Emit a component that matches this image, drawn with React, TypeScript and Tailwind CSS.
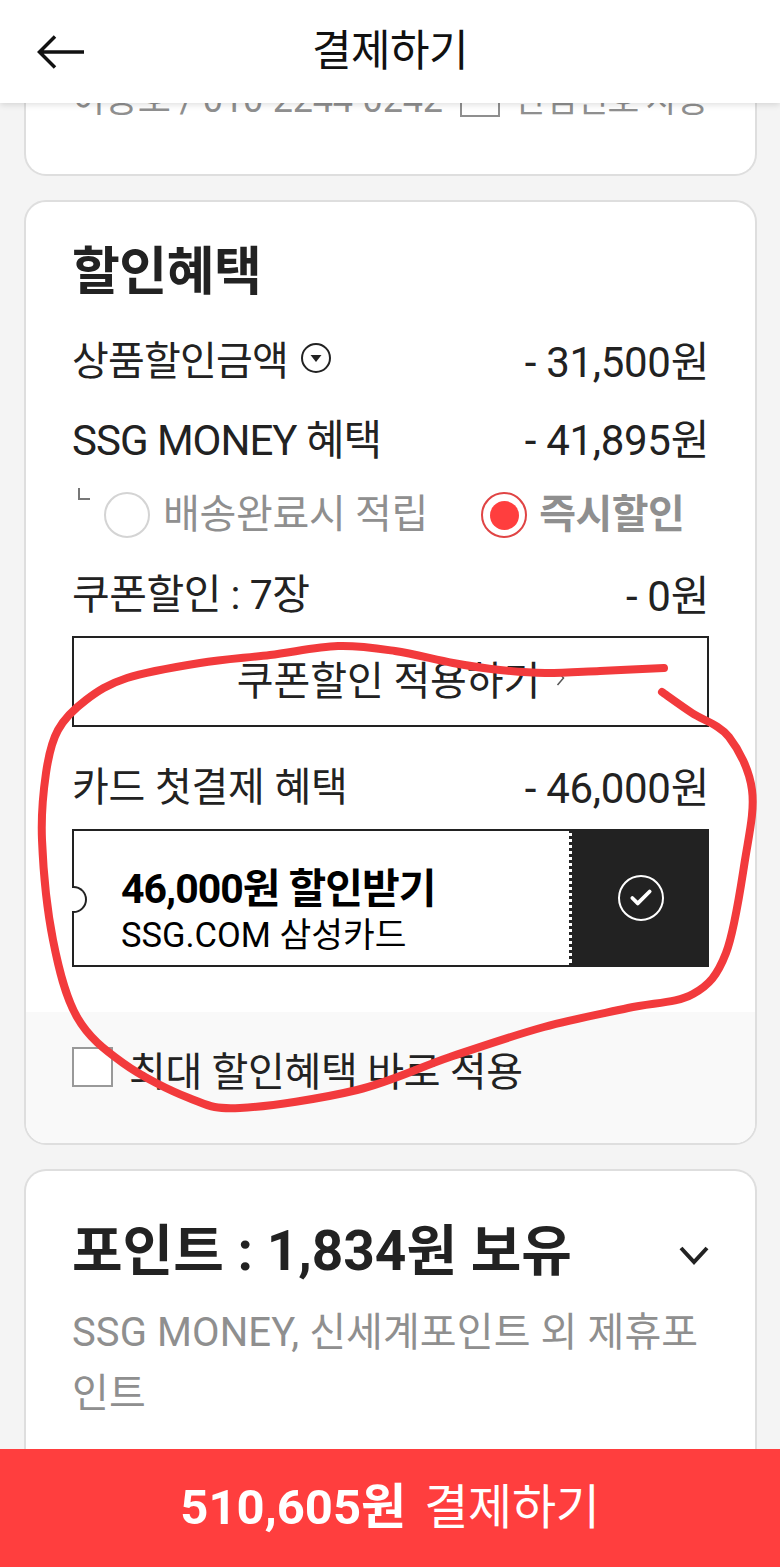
import React from 'react';
import { Check } from 'lucide-react';

// Hand-drawn marker stroke over the screenshot, smoothed through these points
const markerPoints: [number, number][] = [
  [664, 668], [600, 671], [545, 673], [500, 670], [453, 663], [395, 651], [338, 646], [270, 655], [200, 663], [127, 678],
  [86, 700], [58, 730], [46, 773], [42, 840], [53, 940], [77, 1017], [123, 1063], [189, 1098], [240, 1108],
  [357, 1090], [450, 1057], [544, 1027], [628, 1008], [693, 994], [726, 953], [745, 860], [752, 790], [729, 737],
  [692, 713], [662, 692],
];

const markerPath = markerPoints.reduce((d, p, i, pts) => {
  if (i === 0) return `M${p[0]} ${p[1]}`;
  const p0 = pts[Math.max(i - 2, 0)];
  const p1 = pts[i - 1];
  const p3 = pts[Math.min(i + 1, pts.length - 1)];
  const c1 = [p1[0] + (p[0] - p0[0]) / 6, p1[1] + (p[1] - p0[1]) / 6];
  const c2 = [p[0] - (p3[0] - p1[0]) / 6, p[1] - (p3[1] - p1[1]) / 6];
  return `${d} C${c1[0]} ${c1[1]} ${c2[0]} ${c2[1]} ${p[0]} ${p[1]}`;
}, '');

const Row = ({ label, amount, className = '', children }: { label: string; amount: string; className?: string; children?: React.ReactNode }) => (
  <div className={`flex h-[60px] items-center justify-between text-[#222] ${className}`}>
    <span className="flex items-center">
      {label}
      {children}
    </span>
    <span className="-mr-[1px] text-[42px] tracking-[-0.3px]">{amount}</span>
  </div>
);

export default function App() {
  return (
    <div className="relative flex h-[1567px] w-[780px] flex-col overflow-hidden bg-[#f4f4f4] font-['Roboto','Noto_Sans_CJK_KR',sans-serif]">
      {/* Header */}
      <header className="relative z-10 flex h-[103px] shrink-0 items-center justify-center bg-white shadow-[0_2px_6px_rgba(0,0,0,0.12)]">
        <svg className="absolute left-[36px] top-[34px]" width="50" height="36" viewBox="0 0 50 36" fill="none" stroke="#111" strokeWidth="3.5">
          <path d="M48 18H4M19 2.500 3.500 18 19 33.500" />
        </svg>
        <h1 className="text-[43px] font-normal tracking-[-0.5px] text-[#111]">결제하기</h1>
      </header>

      <main className="min-h-0 flex-1 overflow-hidden pl-[24px] pr-[23px]">
        {/* Orderer card, scrolled under the header */}
        <section className="-mt-[40px] h-[113px] rounded-b-[22px] border-2 border-t-0 border-[#dedede] bg-white pl-[46px] pr-[47px]">
          <div className="flex h-[61px] items-end justify-between pb-[2px] text-[36px] leading-[44px] tracking-[-0.2px] text-[#8f8f8f]">
            <span>이용호 / 010-2244-0242</span>
            <span className="flex items-end gap-[15px] text-[34.500px] tracking-[-0.8px]">
              <span className="mb-[5px] h-[40px] w-[40px] border-2 border-[#8f8f8f]" />
              안심번호 사용
            </span>
          </div>
        </section>

        {/* Discount card */}
        <section className="mt-[24px] flex h-[945px] flex-col overflow-hidden rounded-[22px] border-2 border-[#dedede] bg-white">
          <div className="flex-1 pl-[46px] pr-[47px]">
            <h2 className="mt-[40px] h-[62px] text-[52px] font-bold leading-[62px] tracking-[-0.5px] text-[#222]">할인혜택</h2>
            <Row label="상품할인금액" amount="- 31,500원" className="mt-[28px] text-[40px] tracking-[-0.8px]">
              <svg className="mb-[8px] ml-[12px]" width="32" height="32" viewBox="0 0 32 32" fill="none">
                <circle cx="16" cy="16" r="14" stroke="#222" strokeWidth="2" />
                <path d="M10.500 13h11L16 20z" fill="#222" />
              </svg>
            </Row>
            <Row label="SSG MONEY 혜택" amount="- 41,895원" className="mt-[18px] text-[42px] tracking-[-1px]" />

            <div className="relative mt-[15px] flex h-[60px] items-center pl-[32px] text-[40px] text-[#8f8f8f]">
              <span className="absolute left-[6px] top-[3px] h-[12px] w-[12px] border-b-2 border-l-2 border-[#777]" />
              <span className="h-[46px] w-[46px] rounded-full border-2 border-[#d4d4d4]" />
              <span className="ml-[13px] tracking-[-0.3px]">배송완료시 적립</span>
              <span className="ml-[53px] flex h-[46px] w-[46px] items-center justify-center rounded-full border-2 border-[#e04444]">
                <span className="h-[29px] w-[29px] rounded-full bg-[#ff3e3e]" />
              </span>
              <span className="ml-[12px] font-bold tracking-[-0.5px]">즉시할인</span>
            </div>

            <Row label="쿠폰할인 : 7장" amount="- 0원" className="mt-[21px] text-[41px] tracking-[-0.5px]" />
            <button type="button" className="mt-[10px] flex h-[91px] w-[637px] items-center justify-center border-2 border-[#222] bg-white pr-[4px] text-[40px] tracking-[-0.1px] text-[#222]">
              <span className="relative">
                쿠폰할인 적용하기
                <svg className="absolute -right-[26px] top-[17px]" width="10" height="18" viewBox="0 0 10 18" fill="none" stroke="#555" strokeWidth="1.500">
                  <path d="M1.500 2l6 7-6 7" />
                </svg>
              </span>
            </button>

            <Row label="카드 첫결제 혜택" amount="- 46,000원" className="mt-[31px] text-[40px] tracking-[-0.2px]" />

            {/* Coupon ticket */}
            <div className="relative mt-[11px] flex h-[138px] w-[637px]">
              <div className="flex flex-1 flex-col justify-center border-y-2 border-l-2 border-[#222] bg-white pl-[47px] pt-[24px] text-black">
                <span className="h-[50px] text-[41px] font-bold leading-[50px] tracking-[-1px]">46,000원 할인받기</span>
                <span className="h-[42px] text-[34.500px] leading-[42px]">SSG.COM 삼성카드</span>
              </div>
              <span className="absolute left-0 top-[57px] h-[27px] w-[15px] rounded-r-full border-2 border-l-0 border-[#222] bg-white" />
              <span className="w-[3px] border-l-[3px] border-dotted border-[#222] bg-white" />
              <div className="flex w-[137px] items-center justify-center bg-[#222]">
                <span className="flex h-[46px] w-[46px] items-center justify-center rounded-full border-2 border-white">
                  <Check size={26} strokeWidth={3.5} color="#fff" />
                </span>
              </div>
            </div>
          </div>

          <div className="flex h-[131px] shrink-0 items-start bg-[#f9f9f9] pl-[46px]">
            <span className="mt-[35px] h-[40px] w-[41px] border-2 border-[#999] bg-white" />
            <span className="ml-[16px] mt-[36px] text-[40px] leading-[50px] tracking-[-0.3px] text-[#222]">최대 할인혜택 바로 적용</span>
          </div>
        </section>

        {/* Points card */}
        <section className="mt-[24px] h-[300px] rounded-t-[22px] border-2 border-b-0 border-[#dedede] bg-white pl-[46px] pr-[47px] pt-[44px]">
          <div className="flex h-[72px] items-center justify-between">
            <h2 className="text-[55px] font-bold text-[#222]">포인트 : 1,834원 보유</h2>
            <svg className="mr-[-1px] mt-[8px]" width="30" height="19" viewBox="0 0 30 19" fill="none" stroke="#222" strokeWidth="4">
              <path d="M2 2l13 14L28 2" />
            </svg>
          </div>
          <p className="mt-[15px] text-[40px] leading-[61px] tracking-[0.1px] text-[#8f8f8f]">
            SSG MONEY, 신세계포인트 외 제휴포
            <br />
            인트
          </p>
        </section>
      </main>

      {/* Pay bar */}
      <button type="button" className="relative z-10 flex h-[118px] shrink-0 items-center justify-center bg-[#ff3e3e] text-white">
        <span className="text-[49px] font-bold">510,605원</span>
        <span className="ml-[18px] text-[48px] tracking-[-0.3px]">결제하기</span>
      </button>

      {/* Red marker annotation */}
      <svg className="pointer-events-none absolute inset-0 z-20" width="780" height="1567" viewBox="0 0 780 1567" fill="none">
        <path d={markerPath} stroke="#f23a3c" strokeWidth="8" strokeLinecap="round" strokeLinejoin="round" />
      </svg>
    </div>
  );
}
